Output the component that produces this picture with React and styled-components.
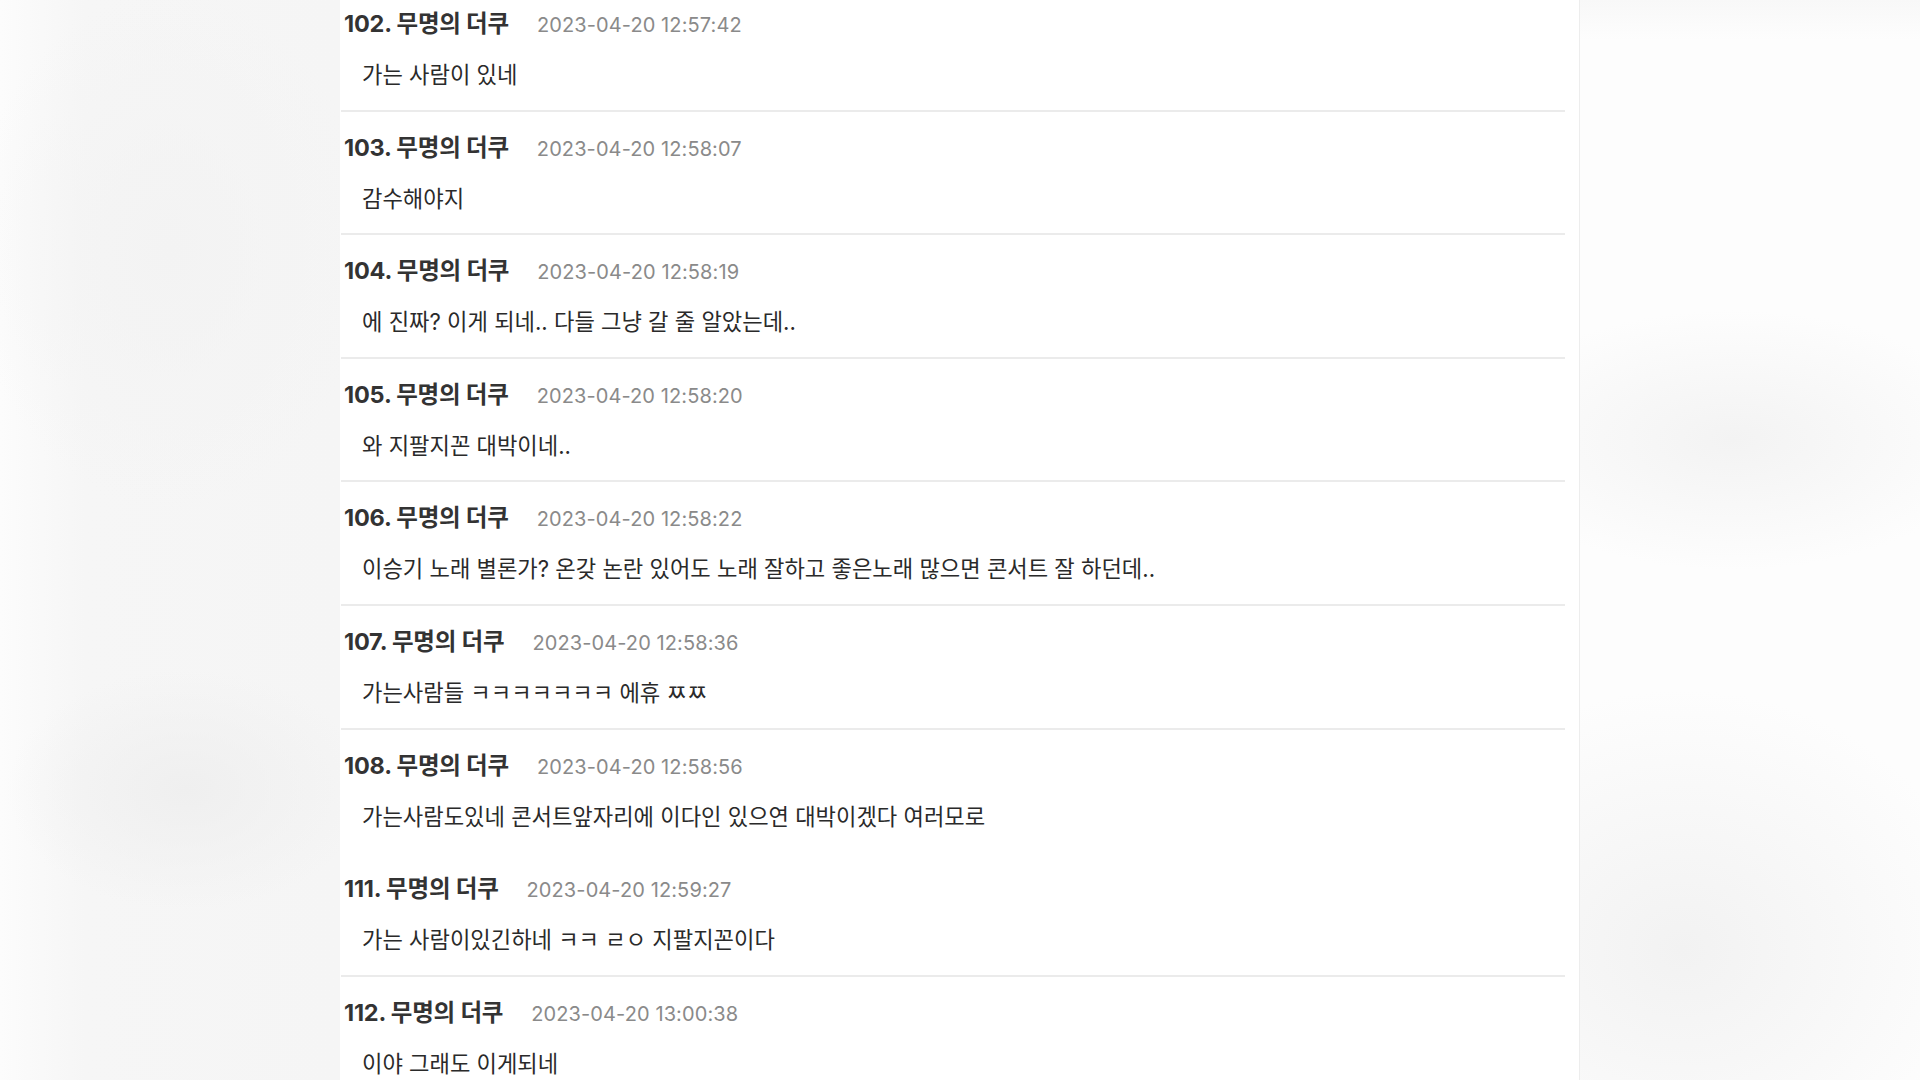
import React from 'react'
import styled, { createGlobalStyle } from 'styled-components'

const GlobalStyle = createGlobalStyle`
  html, body {
    margin: 0;
    padding: 0;
    height: 100%;
    overflow: hidden;
  }
  body {
    background: #f6f6f6;
    font-family: Inter, 'Noto Sans CJK KR', sans-serif;
  }
`

const Page = styled.div`
  display: flex;
  width: 1920px;
  height: 1080px;
  overflow: hidden;
`

const Side = styled.div`
  flex: 1;
  background: ${p =>
    p.right
      ? `radial-gradient(ellipse 260px 130px at 45% 440px, #f3f3f3 0%, rgba(243,243,243,0) 100%),
         radial-gradient(ellipse 300px 260px at 30% 950px, #f2f2f2 0%, rgba(242,242,242,0) 100%),
         linear-gradient(180deg, #f8f8f8 0px, #fdfdfd 40px, #fdfdfd 100%)`
      : `radial-gradient(ellipse 180px 120px at 55% 790px, #efefef 0%, rgba(239,239,239,0) 100%),
         radial-gradient(ellipse 200px 260px at 50% 250px, #f3f3f3 0%, rgba(243,243,243,0) 100%),
         linear-gradient(90deg, #fcfcfc 0%, #f6f6f6 25%, #f5f5f5 100%)`};
  border-left: ${p => (p.right ? '1px solid #ededed' : 'none')};
`

const Panel = styled.main`
  width: 1239px;
  background: #fff;
  overflow: hidden;
`

const List = styled.ul`
  list-style: none;
  margin: -12px 0 0;
  padding: 0;
`

const Comment = styled.li`
  margin: 0 14px 0 1px;
  padding: 21px 0 0;
  border-bottom: 2px solid ${p => (p.noLine ? 'transparent' : '#ebebeb')};
  height: 123.6px;
  box-sizing: border-box;
`

const Header = styled.div`
  display: flex;
  align-items: baseline;
  gap: 28px;
  height: 30px;
  line-height: 30px;
  padding-left: 3px;
`

const Author = styled.span`
  font-size: 23.5px;
  font-weight: 700;
  color: #333;
  letter-spacing: -0.2px;
`

const Time = styled.span`
  font-size: 20px;
  color: #8a8a8a;
  letter-spacing: 0.1px;
`

const Body = styled.p`
  margin: 21px 0 0;
  padding-left: 21px;
  font-size: 22.2px;
  line-height: 30px;
  color: #2a2a2a;
`

const comments = [
  { no: 102, time: '2023-04-20 12:57:42', text: '가는 사람이 있네' },
  { no: 103, time: '2023-04-20 12:58:07', text: '감수해야지' },
  { no: 104, time: '2023-04-20 12:58:19', text: '에 진짜? 이게 되네.. 다들 그냥 갈 줄 알았는데..' },
  { no: 105, time: '2023-04-20 12:58:20', text: '와 지팔지꼰 대박이네..' },
  {
    no: 106,
    time: '2023-04-20 12:58:22',
    text: '이승기 노래 별론가? 온갖 논란 있어도 노래 잘하고 좋은노래 많으면 콘서트 잘 하던데..',
  },
  { no: 107, time: '2023-04-20 12:58:36', text: '가는사람들 ㅋㅋㅋㅋㅋㅋㅋ 에휴 ㅉㅉ' },
  {
    no: 108,
    time: '2023-04-20 12:58:56',
    text: '가는사람도있네 콘서트앞자리에 이다인 있으연 대박이겠다 여러모로',
    noLine: true,
  },
  { no: 111, time: '2023-04-20 12:59:27', text: '가는 사람이있긴하네 ㅋㅋ ㄹㅇ 지팔지꼰이다' },
  { no: 112, time: '2023-04-20 13:00:38', text: '이야 그래도 이게되네' },
]

export default function App() {
  return (
    <>
      <GlobalStyle />
      <Page>
        <Side />
        <Panel>
          <List>
            {comments.map(c => (
              <Comment key={c.no} noLine={c.noLine}>
                <Header>
                  <Author>{c.no}. 무명의 더쿠</Author>
                  <Time>{c.time}</Time>
                </Header>
                <Body>{c.text}</Body>
              </Comment>
            ))}
          </List>
        </Panel>
        <Side right />
      </Page>
    </>
  )
}
